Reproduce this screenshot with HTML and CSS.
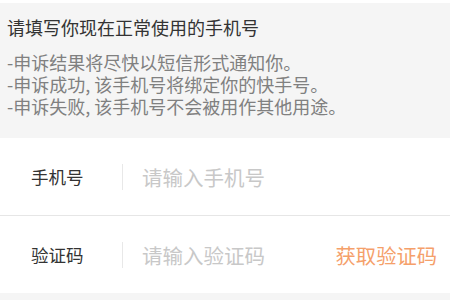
FILE: index.html
```html
<!DOCTYPE html>
<html lang="zh-CN">
<head>
<meta charset="utf-8">
<link rel="stylesheet" href="styles.css">
</head>
<body>
<div class="page">
  <section class="notice">
    <h1 class="notice-title">请填写你现在正常使用的手机号</h1>
    <p class="notice-line">-申诉结果将尽快以短信形式通知你。</p>
    <p class="notice-line">-申诉成功, 该手机号将绑定你的快手号。</p>
    <p class="notice-line">-申诉失败, 该手机号不会被用作其他用途。</p>
  </section>
  <form class="form">
    <div class="row">
      <label class="label">手机号</label>
      <span class="divider"></span>
      <input class="field" type="text" placeholder="请输入手机号">
    </div>
    <div class="row">
      <label class="label">验证码</label>
      <span class="divider"></span>
      <input class="field" type="text" placeholder="请输入验证码">
      <span class="get-code">获取验证码</span>
    </div>
  </form>
  <div class="footer"></div>
</div>
</body>
</html>
```
FILE: styles.css
```css
html, body {
  margin: 0;
  padding: 0;
  background: #fff;
}
body {
  font-family: "Noto Sans CJK SC", "Noto Sans", sans-serif;
}
.page {
  padding-top: 3px;
}
.notice {
  background: #f5f5f5;
  padding: 12px 8px 21px 7px;
}
.notice-title {
  margin: 0 0 12px;
  font-size: 18px;
  line-height: 24px;
  font-weight: normal;
  color: #333;
}
.notice-line {
  margin: 0;
  font-size: 18px;
  line-height: 22px;
  color: #808080;
}
.form {
  margin: 0;
}
.row {
  display: flex;
  align-items: center;
  height: 77px;
  padding: 0 13px 0 31px;
}
.row + .row {
  border-top: 1px solid #e6e6e6;
}
.label {
  width: 91px;
  font-size: 17.5px;
  color: #333;
}
.divider {
  width: 1px;
  height: 26px;
  background: #e8e8e8;
  margin-right: 19px;
}
.field {
  flex: 1;
  min-width: 0;
  border: none;
  outline: none;
  padding: 0;
  background: transparent;
  font-family: inherit;
  font-size: 20.5px;
  color: #333;
}
.field::placeholder {
  color: #c8c8c8;
}
.get-code {
  font-size: 20.3px;
  color: #f5a06a;
}
.footer {
  background: #f5f5f5;
  height: 20px;
}
```
